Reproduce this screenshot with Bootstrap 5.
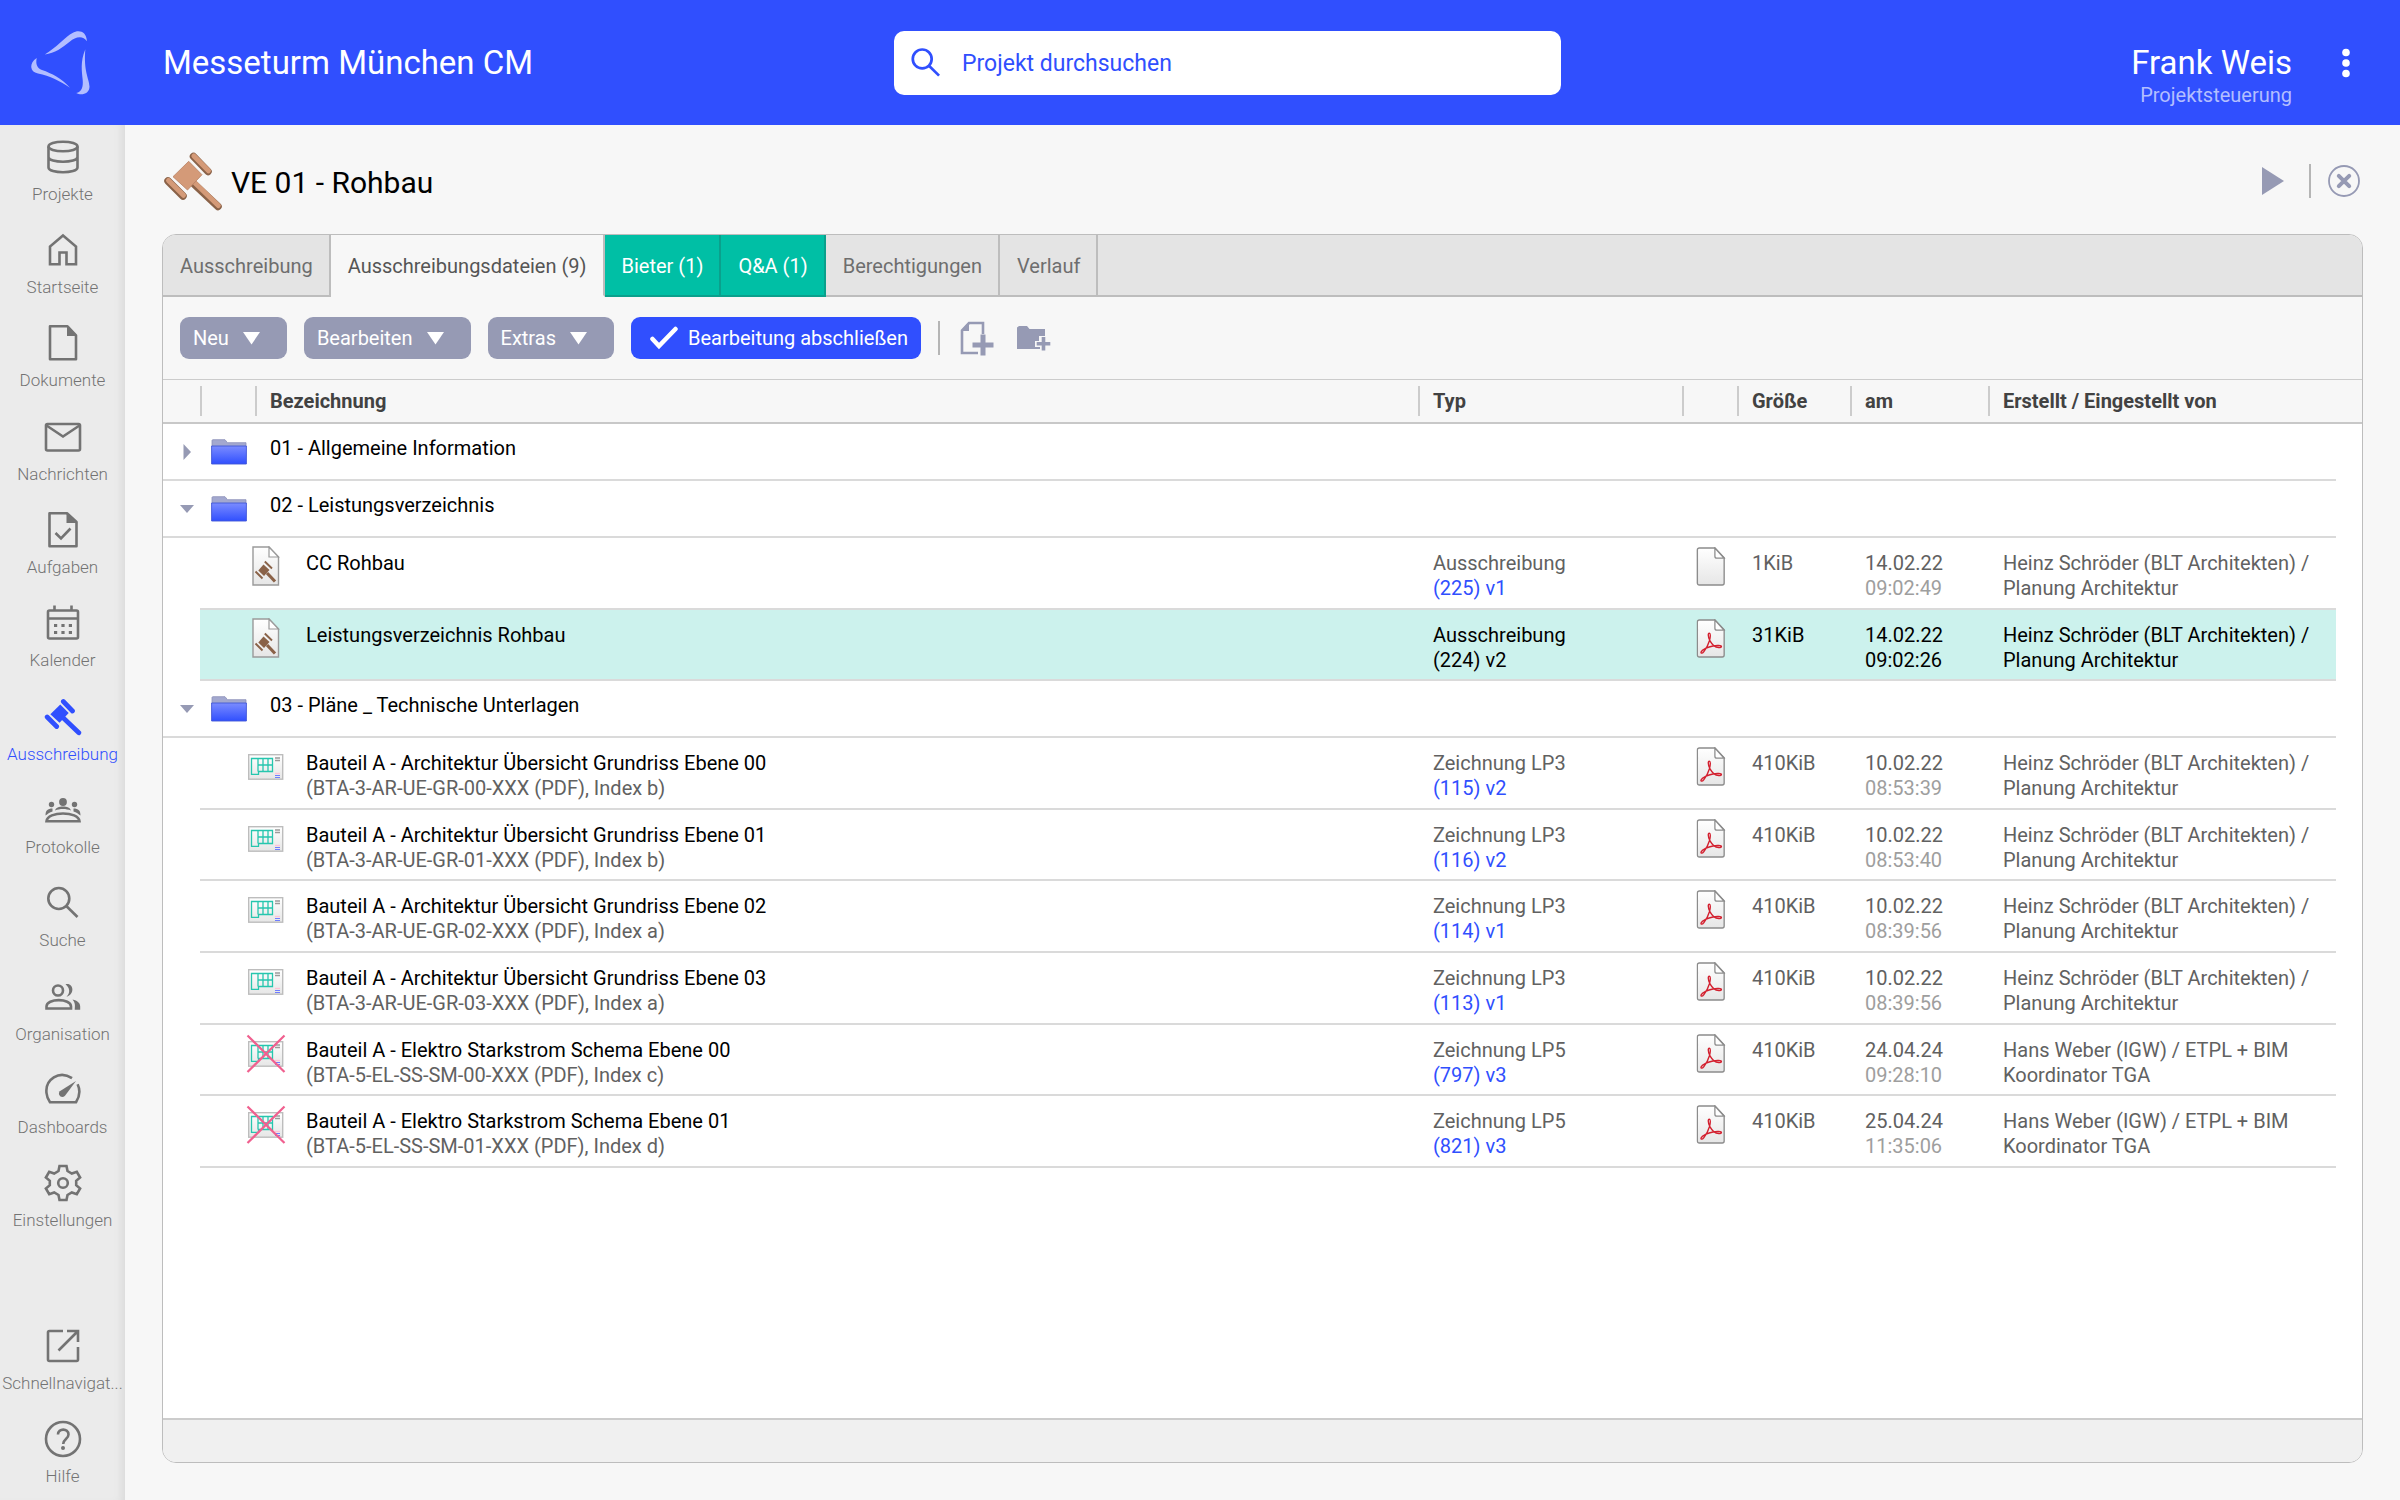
<!DOCTYPE html>
<html lang="de">
<head>
<meta charset="utf-8">
<meta name="viewport" content="width=device-width, initial-scale=1">
<title>VE 01 - Rohbau</title>
<link href="https://cdn.jsdelivr.net/npm/bootstrap@5.3.0/dist/css/bootstrap.min.css" rel="stylesheet">
<style>
:root { --brand:#304ffe; --slate:#969ab4; --line:#dadada; --edge:#bdbdbd; --teal:#00bfa5; }
body { font-family: Roboto, "Liberation Sans", sans-serif; font-size:20px; line-height:25px; color:#000; background:#f7f7f7; }
a { text-decoration:none; }
svg { display:block; flex:none; }
.topbar { background:var(--brand); height:125px; display:grid; grid-template-columns:37.25% 27.8% 1fr; align-items:center; color:#fff; }
.logo-slot { width:125px; padding-left:28px; }
.project-name { font-size:33px; line-height:40px; padding-left:38px; font-weight:400; }
.search-box { background:#fff; border-radius:10px; height:64px; padding:0 14px; gap:18px; color:var(--brand); }
.search-box input { border:0; outline:0; background:transparent; font-size:23px; color:var(--brand); padding:2px 0 0; }
.search-box input::placeholder { color:var(--brand); opacity:1; }
.user-box { padding-right:37px; gap:37px; }
.user-name { font-size:33px; line-height:40px; padding-top:25px; }
.user-role { color:#b3beff; }
.side { width:125px; background:#ebebeb; box-shadow:inset -9px 0 8px -6px #d9d9d9; }
.side-link { display:flex; flex-direction:column; align-items:center; height:93px; padding-top:12px; color:#737373; font-size:17px; line-height:22px; font-weight:300; white-space:nowrap; }
.side-link:nth-child(3n) { height:94px; }
.side-link svg { margin-bottom:6px; }
.side-link.current { color:var(--brand); }
.side .icn { width:40px; height:40px; fill:none; stroke:currentColor; stroke-width:2.6; }
.work { padding:0 37px 37px; }
.title-bar { height:109px; padding:2px 2px 0 1px; }
.title-bar h1 { font-size:30px; line-height:36px; font-weight:400; margin:0; padding:4px 0 0 8px; }
.bare { border:0; background:none; padding:0; color:var(--slate); }
.rule-v { width:2px; height:34px; background:#b5b5b5; }
.panel { border:1px solid var(--edge); border-radius:14px; overflow:hidden; background:#fff; }
.tab-strip { background:#e4e4e4; height:62px; }
.tab-strip .tab-btn { border:0; border-right:2px solid var(--edge); border-bottom:2px solid var(--edge); background:#e4e4e4; color:#6e6e6e; padding:2px 16px 0 17px; height:62px; }
.tab-strip .tab-btn.active { background:#f7f7f7; color:#555; border-bottom-color:#f7f7f7; }
.tab-strip .tab-btn.hot { background:var(--teal); color:#fff; border-color:#0aa08c; }
.tab-rest { border-bottom:2px solid var(--edge); }
.tools { background:#f7f7f7; padding:20px 17px; gap:17px; border-bottom:1px solid #ccc; }
.tool-btn { height:42px; border:0; border-radius:9px; background:var(--slate); color:#fff; padding:0 27px 0 13px; gap:14px; }
.tool-btn.go { background:var(--brand); padding:0 13px 0 19px; gap:10px; }
.files { table-layout:fixed; width:100%; border-collapse:separate; border-spacing:0; }
.files th { height:44px; background:#f7f7f7; border-bottom:2px solid #c8c8c8; padding:0; color:#424242; font-weight:700; }
.files th > div { height:30px; line-height:30px; border-left:2px solid #ccc; padding-left:13px; white-space:nowrap; }
.files th:first-child > div { border:0; }
.files td { height:72px; vertical-align:top; padding:13px 0 0 15px; border-bottom:2px solid var(--line); color:#616161; }
.files tr:nth-child(3n+1) td { height:71px; }
.files tr.dir td { height:57px; padding-top:12px; color:#000; }
.files td:last-child, .files tr.doc td:first-child { border:0; }
.files tr.dir td.arrow { padding:19px 0 0 15px; }
.files tr.dir td.dir-icon { padding:15px 0 0 11px; }
.files td.ext { padding:9px 0 0 14px; }
.files td.title { padding:0 0 0 46px; }
.kind { width:40px; padding-top:8px; }
.label-col { padding:13px 0 0 20px; color:#000; }
.label-col span { color:#616161; }
.files .clock { color:#9e9e9e; }
.files a { color:var(--brand); }
.files tr.chosen td:not(:first-child):not(:last-child) { background:#ccf2ed; color:#000; }
.files tr.chosen a, .files tr.chosen .clock { color:#000; }
.panel-foot { height:44px; background:#f0f0f0; border-top:2px solid #ccc; }
</style>
</head>
<body>
<svg width="0" height="0" class="position-absolute" aria-hidden="true">
  <defs>
    <linearGradient id="gFolder" x1="0" y1="0" x2="0" y2="1"><stop offset="0" stop-color="#7b8cff"/><stop offset="1" stop-color="#304ffe"/></linearGradient>
    <linearGradient id="gPage" x1="0" y1="0" x2="0" y2="1"><stop offset="0" stop-color="#fff"/><stop offset="1" stop-color="#e6e6e6"/></linearGradient>
    <symbol id="gavel" viewBox="0 0 60 60">
      <g stroke="currentColor" fill="currentColor" stroke-linecap="round">
        <path stroke="none" d="M25.7 10.3 39 23.7 24.5 39 10 25.7z"/>
        <path d="M30.500 5.500 45 20.500M5 30 20 45" stroke-width="7.500"/>
        <path d="M31 32 55 55" stroke-width="7.500"/>
      </g>
    </symbol>
    <symbol id="page" viewBox="0 0 30 40">
      <path d="M3 1h16l9.500 10v26a2 2 0 0 1-2 2H3a2 2 0 0 1-2-2V3a2 2 0 0 1 2-2z" fill="url(#gPage)" stroke="#8c8c8c" stroke-width="1.400"/>
      <path d="M19 1v8.500a2 2 0 0 0 2 2h7.500z" fill="#fff" stroke="#8c8c8c" stroke-width="1.300"/>
    </symbol>
    <symbol id="pdf" viewBox="0 0 30 40">
      <use href="#page"/>
      <path d="M13.300 14.500c1.600.3 1 4.500.2 7.500-1.200 4.300-4 9-6 11.700-1.300 1.800-3.200 1.600-2.700.2.900-2.600 7.300-5.300 12.200-6.200 4-.8 8.700-.7 8.700.7s-5 1.200-7.500-.8c-3.200-2.600-6-7.600-6-11.200 0-1.300.4-2 1.100-1.900z" fill="none" stroke="#d3202f" stroke-width="1.400"/>
    </symbol>
    <symbol id="tender" viewBox="0 0 40 40">
      <path d="M7 1h16l9.500 10v28H7z" fill="url(#gPage)" stroke="#9a9a9a" stroke-width="1.400"/>
      <path d="M23 1v10h9.500z" fill="#fff" stroke="#9a9a9a" stroke-width="1.200"/>
      <g stroke="#8a6248" fill="#8a6248"><path stroke="none" d="M17.500 18.500 23.500 24 18 30 12.300 24.500z"/><path d="M18.800 15.500 26 22.500M9.500 25.500 16.500 32.500" stroke-width="1.900"/><path d="M21 27 29 35.500" stroke-width="3.200"/></g>
    </symbol>
    <symbol id="plan" viewBox="0 0 40 40">
      <rect x="2.700" y="8.700" width="34" height="24.500" fill="url(#gPage)" stroke="#bdbdbd" stroke-width="1.400"/>
      <path d="M5.500 12.500h21v13h-14v2.800h-7zM12 12.500v13M12 19h14.500M17 12.500v13M22 12.500v13" fill="none" stroke="#26c6ae" stroke-width="1.300"/>
      <path d="M29 12h5M29 14.500h5" stroke="#9a9a9a" stroke-width="1.300"/><path d="M29 27.500h5" stroke="#ffc1d6" stroke-width="1.300"/><path d="M29 29.500h5M29 31.500h5" stroke="#6f7dff" stroke-width="1.200"/>
    </symbol>
    <symbol id="planvoid" viewBox="0 0 40 40"><use href="#plan"/><path d="M1.500 2.500 38.500 39M38.500 2.500 1.500 39" stroke="#f0608f" stroke-width="2.200"/></symbol>
    <symbol id="folder" viewBox="0 0 36 26">
      <path d="M1 8V1.500A1 1 0 0 1 2 .7h12l2.500 3H35V8z" fill="#a3a8cf" stroke="#8a8fb8" stroke-width=".8"/>
      <path d="M.6 7h34.800v18H.6z" fill="url(#gFolder)" stroke="#4257d6" stroke-width=".9"/>
    </symbol>
    <symbol id="down" viewBox="0 0 18 18"><path d="M2 5h14l-7 8z" fill="#969ab4"/></symbol>
    <symbol id="right" viewBox="0 0 18 18"><path d="M5.500 1v16l7.500-8z" fill="#969ab4"/></symbol>
    <symbol id="tri" viewBox="0 0 17 14"><path d="M0 1h17L8.500 13.500z" fill="#fff"/></symbol>
    <symbol id="lens" viewBox="0 0 40 40"><circle cx="15.800" cy="15.500" r="10.500"/><path d="M23.300 23 34.500 34"/></symbol>
  </defs>
</svg>

<div class="d-flex flex-column min-vh-100">
  <header class="topbar">
    <div class="d-flex align-items-center">
      <div class="logo-slot"><a href="#" aria-label="Startseite"><svg width="64" height="70" viewBox="28 28 64 70" fill="#b3beff"><path d="M44.800 54.500C56 48 66 36 72.500 33c6-3.500 14-2 14.400 8.300C83 35 75 37 70 41.500 62 48 55 53 44.800 54.500z"/><path d="M36.700 58C29 63 29.500 72 38 73.500c12 2.500 22 7.500 32 14.200C61 78 52 73.500 42 70c-5-2-6.500-6-5.300-12z"/><path d="M85.300 49.300C80 62 82 72 82.700 80c.6 7-1 12-6.500 13 5 3 13.300 1 13.300-6.500C89 78 83.500 72 85.300 49.300z"/></svg></a></div>
      <div class="project-name">Messeturm München CM</div>
    </div>
    <form class="search-box d-flex align-items-center" role="search">
      <svg width="36" height="36" viewBox="0 0 40 40" fill="none" stroke="currentColor" stroke-width="3"><use href="#lens"/></svg>
      <input class="flex-fill" type="search" placeholder="Projekt durchsuchen" aria-label="Projekt durchsuchen">
    </form>
    <div class="user-box d-flex justify-content-end align-items-center">
      <div class="text-end"><div class="user-name">Frank Weis</div><div class="user-role">Projektsteuerung</div></div>
      <button class="bare" type="button" aria-label="Menü"><svg width="34" height="34" viewBox="0 0 34 34" fill="#fff"><circle cx="17" cy="6.500" r="3.800"/><circle cx="17" cy="17" r="3.800"/><circle cx="17" cy="27.500" r="3.800"/></svg></button>
    </div>
  </header>

  <div class="d-flex flex-fill">
    <nav class="side d-flex flex-column flex-shrink-0" aria-label="Module">
      <a class="side-link" href="#"><svg class="icn" viewBox="0 0 40 40"><ellipse cx="20" cy="9.500" rx="14.500" ry="4.800"/><path d="M5.500 9.500v21c0 6.400 29 6.400 29 0v-21M5.500 20c0 6.400 29 6.400 29 0"/></svg>Projekte</a>
      <a class="side-link" href="#"><svg class="icn" viewBox="0 0 40 40"><path d="M20 5.500 33 16.500v17.800h-9.500V22.500h-7v11.800H7V16.500z"/></svg>Startseite</a>
      <a class="side-link" href="#"><svg class="icn" viewBox="0 0 40 40"><path d="M7 3.300h17.500L33 12.500v23.700H7z" stroke-linejoin="round"/><path d="M24 3.300v9.700h9z" fill="currentColor" stroke="none"/></svg>Dokumente</a>
      <a class="side-link" href="#"><svg class="icn" viewBox="0 0 40 40"><rect x="3" y="7" width="34" height="26.500" rx="1.500"/><path d="M3.500 8.500 20 19.500 36.500 8.500"/></svg>Nachrichten</a>
      <a class="side-link" href="#"><svg class="icn" viewBox="0 0 40 40"><path d="M6.500 3.300h17.500L33.500 12v24.200h-27z" stroke-linejoin="round"/><path d="M23.500 3.300v9.700h10z" fill="currentColor" stroke="none"/><path d="M12.500 23 18 28.500 27.500 18.500"/></svg>Aufgaben</a>
      <a class="side-link" href="#"><svg class="icn" viewBox="0 0 40 40"><rect x="5" y="7.500" width="30" height="28" rx="1.500"/><path d="M5 15.500h30M11.500 2.500v5M28.500 2.500v5"/><path d="M11 22.500h3.200M18.400 22.500h3.200M25.800 22.500h3.200M11 29.500h3.200M18.400 29.500h3.200M25.800 29.500h3.200" stroke-width="3.200"/></svg>Kalender</a>
      <a class="side-link current" href="#" aria-current="page"><svg width="40" height="40"><use href="#gavel" x="1" y="1" width="38" height="38"/></svg>Ausschreibung</a>
      <a class="side-link" href="#"><svg class="icn" viewBox="0 0 40 40"><g fill="currentColor" stroke="none"><circle cx="20" cy="12" r="3.900"/><circle cx="8.500" cy="14.500" r="2.700"/><circle cx="31.500" cy="14.500" r="2.700"/><path d="M12 20.500c1-5.500 15-5.500 16 0-5-2-11-2-16 0zM2.500 25.500c0-5 2-7 7-7v3c-3 1-5 2.500-7 4zM37.500 25.500c0-5-2-7-7-7v3c3 1 5 2.500 7 4z"/></g><path d="M3.500 31.300c1-10.500 32-10.500 33 0z"/></svg>Protokolle</a>
      <a class="side-link" href="#"><svg class="icn" viewBox="0 0 40 40"><use href="#lens"/></svg>Suche</a>
      <a class="side-link" href="#"><svg class="icn" viewBox="0 0 40 40"><circle cx="15" cy="13.500" r="5"/><path d="M3.500 31.500v-2c0-8.500 24.500-8.500 24.500 0v2z"/><path d="M22.500 7.200c8-2 10 10 1 12.600 4-4 3.500-9-1-12.600zM29.500 22.500c5 1.200 7.700 3.500 7.700 7v3.300h-5.500c.5-5 .5-7-2.200-10.300z" fill="currentColor" stroke="none"/></svg>Organisation</a>
      <a class="side-link" href="#"><svg class="icn" viewBox="0 0 40 40" stroke-width="3"><path d="M29 8.200C16-.5 2 10 3.500 23c.3 3.500 1.500 6.500 3.500 9.300h26c4-6.300 4.500-12 1.600-18"/><path d="M33 11 22 25.700c-3.500 3.300-8-1-5.200-4.500z" fill="currentColor" stroke="none"/></svg>Dashboards</a>
      <a class="side-link" href="#"><svg class="icn" viewBox="0 0 40 40"><path d="M16.500 3h7l1 5 4.300 2.500 5-1.700 3.300 5.700-3.900 3.300v4.400l3.900 3.300-3.300 5.700-5-1.700-4.300 2.500-1 5h-7l-1-5-4.300-2.500-5 1.700-3.300-5.700 3.900-3.300v-4.400l-3.900-3.300 3.300-5.700 5 1.700 4.300-2.500z"/><circle cx="20" cy="20" r="4.800"/></svg>Einstellungen</a>
      <div class="mt-auto">
        <a class="side-link" href="#"><svg class="icn" viewBox="0 0 40 40" stroke-width="3"><path d="M20 5H6.500q-1.500 0-1.500 1.500v27q0 1.500 1.500 1.500h27q1.500 0 1.500-1.500V21M24 5h11v11M34.500 5.500 15.500 24.500"/></svg>Schnellnavigat...</a>
        <a class="side-link" href="#"><svg class="icn" viewBox="0 0 40 40"><circle cx="20" cy="20" r="17"/><path d="M15 15.500c0-6.500 10.500-6.500 10.500 0 0 4.500-5.300 4.500-5.300 9.500"/><circle cx="20" cy="29" r="2" fill="currentColor" stroke="none"/></svg>Hilfe</a>
      </div>
    </nav>

    <main class="work d-flex flex-column flex-fill">
      <div class="title-bar d-flex align-items-center">
        <svg width="60" height="60" viewBox="0 0 60 60"><g fill="none" stroke="#8a6248" stroke-linecap="round"><path d="M30.500 5.500 45 20.500M5 30 20 45M31 33 55 55.500" stroke-width="7.500"/><path d="M30.900 5 45.500 19.800M5.500 29.400 20.500 44.300M32 32 55.300 54.500" stroke="#d49a78" stroke-width="5"/></g><path d="M25.700 10.300 39 23.700 24.500 39 10 25.700z" fill="#d49a78" stroke="#b98263" stroke-width=".8"/></svg>
        <h1>VE 01 - Rohbau</h1>
        <div class="d-flex align-items-center ms-auto">
          <button class="bare me-4" type="button" aria-label="Abspielen"><svg width="24" height="28" viewBox="0 0 24 28"><path d="M1 0v28l22-14z" fill="#969ab4"/></svg></button>
          <div class="rule-v me-3"></div>
          <button class="bare" type="button" aria-label="Schließen"><svg width="34" height="34" viewBox="0 0 34 34" fill="none" stroke="#969ab4"><circle cx="17" cy="17" r="15" stroke-width="1.800"/><path d="M11.800 11.800 22.200 22.200M22.200 11.800 11.800 22.200" stroke-width="4" stroke-linecap="round"/></svg></button>
        </div>
      </div>

      <section class="panel d-flex flex-column flex-fill">
        <div class="tab-strip d-flex" role="tablist">
          <button class="tab-btn" role="tab" type="button">Ausschreibung</button>
          <button class="tab-btn active" role="tab" type="button" aria-selected="true">Ausschreibungsdateien (9)</button>
          <button class="tab-btn hot" role="tab" type="button">Bieter (1)</button>
          <button class="tab-btn hot" role="tab" type="button">Q&amp;A (1)</button>
          <button class="tab-btn" role="tab" type="button">Berechtigungen</button>
          <button class="tab-btn" role="tab" type="button">Verlauf</button>
          <div class="tab-rest flex-fill"></div>
        </div>
        <div class="tools d-flex align-items-center">
          <button class="tool-btn d-flex align-items-center" type="button">Neu <svg width="17" height="14"><use href="#tri"/></svg></button>
          <button class="tool-btn d-flex align-items-center" type="button">Bearbeiten <svg width="17" height="14"><use href="#tri"/></svg></button>
          <button class="tool-btn d-flex align-items-center" type="button">Extras <svg width="17" height="14"><use href="#tri"/></svg></button>
          <button class="tool-btn go d-flex align-items-center" type="button"><svg width="28" height="24" viewBox="0 0 28 24"><path d="M2.500 13 9 20 25.500 3" fill="none" stroke="#fff" stroke-width="4.500" stroke-linecap="round"/></svg> Bearbeitung abschließen</button>
          <div class="rule-v"></div>
          <button class="bare" type="button" aria-label="Neues Dokument"><svg width="38" height="36" viewBox="-2 0 38 36"><path d="M24 14V3H10L3 10.500V33h16" fill="none" stroke="#969ab4" stroke-width="2.600"/><path d="M2 11 10 2v9zM21.500 14.500h5v8h8v5h-8v8h-5v-8h-8v-5h8z" fill="#969ab4"/></svg></button>
          <button class="bare ms-1" type="button" aria-label="Neuer Ordner"><svg width="36" height="36" viewBox="0 0 36 36" fill="#969ab4"><path d="M1 7.500 3 6h8l2.500 3H29v7h-6v5h-4v6h5v2H1z"/><path d="M25.700 17h3.600v5h5v3.600h-5v5h-3.600v-5h-5V22h5z"/></svg></button>
        </div>
        <table class="files">
          <colgroup><col style="width:37px"><col style="width:55px"><col><col style="width:264px"><col style="width:55px"><col style="width:113px"><col style="width:138px"><col style="width:348px"><col style="width:26px"></colgroup>
          <thead><tr><th><div></div></th><th><div></div></th><th><div>Bezeichnung</div></th><th><div>Typ</div></th><th><div></div></th><th><div>Größe</div></th><th><div>am</div></th><th colspan="2"><div>Erstellt / Eingestellt von</div></th></tr></thead>
          <tbody>
            <tr class="dir"><td class="arrow"><svg width="18" height="18"><use href="#right"/></svg></td><td class="dir-icon"><svg width="36" height="26"><use href="#folder"/></svg></td><td colspan="6">01 - Allgemeine Information</td><td></td></tr>
            <tr class="dir"><td class="arrow"><svg width="18" height="18"><use href="#down"/></svg></td><td class="dir-icon"><svg width="36" height="26"><use href="#folder"/></svg></td><td colspan="6">02 - Leistungsverzeichnis</td><td></td></tr>
            <tr class="doc"><td></td><td class="title" colspan="2"><div class="d-flex"><div class="kind"><svg width="40" height="40"><use href="#tender"/></svg></div><div class="label-col">CC Rohbau</div></div></td><td>Ausschreibung<br><a href="#">(225) v1</a></td><td class="ext"><svg width="30" height="39"><use href="#page"/></svg></td><td>1KiB</td><td>14.02.22<br><span class="clock">09:02:49</span></td><td>Heinz Schröder (BLT Architekten) / Planung Architektur</td><td></td></tr>
            <tr class="doc chosen"><td></td><td class="title" colspan="2"><div class="d-flex"><div class="kind"><svg width="40" height="40"><use href="#tender"/></svg></div><div class="label-col">Leistungsverzeichnis Rohbau</div></div></td><td>Ausschreibung<br><a href="#">(224) v2</a></td><td class="ext"><svg width="30" height="39"><use href="#pdf"/></svg></td><td>31KiB</td><td>14.02.22<br><span class="clock">09:02:26</span></td><td>Heinz Schröder (BLT Architekten) / Planung Architektur</td><td></td></tr>
            <tr class="dir"><td class="arrow"><svg width="18" height="18"><use href="#down"/></svg></td><td class="dir-icon"><svg width="36" height="26"><use href="#folder"/></svg></td><td colspan="6">03 - Pläne _ Technische Unterlagen</td><td></td></tr>
            <tr class="doc"><td></td><td class="title" colspan="2"><div class="d-flex"><div class="kind"><svg width="40" height="40"><use href="#plan"/></svg></div><div class="label-col">Bauteil A - Architektur Übersicht Grundriss Ebene 00<br><span>(BTA-3-AR-UE-GR-00-XXX (PDF), Index b)</span></div></div></td><td>Zeichnung LP3<br><a href="#">(115) v2</a></td><td class="ext"><svg width="30" height="39"><use href="#pdf"/></svg></td><td>410KiB</td><td>10.02.22<br><span class="clock">08:53:39</span></td><td>Heinz Schröder (BLT Architekten) / Planung Architektur</td><td></td></tr>
            <tr class="doc"><td></td><td class="title" colspan="2"><div class="d-flex"><div class="kind"><svg width="40" height="40"><use href="#plan"/></svg></div><div class="label-col">Bauteil A - Architektur Übersicht Grundriss Ebene 01<br><span>(BTA-3-AR-UE-GR-01-XXX (PDF), Index b)</span></div></div></td><td>Zeichnung LP3<br><a href="#">(116) v2</a></td><td class="ext"><svg width="30" height="39"><use href="#pdf"/></svg></td><td>410KiB</td><td>10.02.22<br><span class="clock">08:53:40</span></td><td>Heinz Schröder (BLT Architekten) / Planung Architektur</td><td></td></tr>
            <tr class="doc"><td></td><td class="title" colspan="2"><div class="d-flex"><div class="kind"><svg width="40" height="40"><use href="#plan"/></svg></div><div class="label-col">Bauteil A - Architektur Übersicht Grundriss Ebene 02<br><span>(BTA-3-AR-UE-GR-02-XXX (PDF), Index a)</span></div></div></td><td>Zeichnung LP3<br><a href="#">(114) v1</a></td><td class="ext"><svg width="30" height="39"><use href="#pdf"/></svg></td><td>410KiB</td><td>10.02.22<br><span class="clock">08:39:56</span></td><td>Heinz Schröder (BLT Architekten) / Planung Architektur</td><td></td></tr>
            <tr class="doc"><td></td><td class="title" colspan="2"><div class="d-flex"><div class="kind"><svg width="40" height="40"><use href="#plan"/></svg></div><div class="label-col">Bauteil A - Architektur Übersicht Grundriss Ebene 03<br><span>(BTA-3-AR-UE-GR-03-XXX (PDF), Index a)</span></div></div></td><td>Zeichnung LP3<br><a href="#">(113) v1</a></td><td class="ext"><svg width="30" height="39"><use href="#pdf"/></svg></td><td>410KiB</td><td>10.02.22<br><span class="clock">08:39:56</span></td><td>Heinz Schröder (BLT Architekten) / Planung Architektur</td><td></td></tr>
            <tr class="doc"><td></td><td class="title" colspan="2"><div class="d-flex"><div class="kind"><svg width="40" height="40"><use href="#planvoid"/></svg></div><div class="label-col">Bauteil A - Elektro Starkstrom Schema Ebene 00<br><span>(BTA-5-EL-SS-SM-00-XXX (PDF), Index c)</span></div></div></td><td>Zeichnung LP5<br><a href="#">(797) v3</a></td><td class="ext"><svg width="30" height="39"><use href="#pdf"/></svg></td><td>410KiB</td><td>24.04.24<br><span class="clock">09:28:10</span></td><td>Hans Weber (IGW) / ETPL + BIM Koordinator TGA</td><td></td></tr>
            <tr class="doc"><td></td><td class="title" colspan="2"><div class="d-flex"><div class="kind"><svg width="40" height="40"><use href="#planvoid"/></svg></div><div class="label-col">Bauteil A - Elektro Starkstrom Schema Ebene 01<br><span>(BTA-5-EL-SS-SM-01-XXX (PDF), Index d)</span></div></div></td><td>Zeichnung LP5<br><a href="#">(821) v3</a></td><td class="ext"><svg width="30" height="39"><use href="#pdf"/></svg></td><td>410KiB</td><td>25.04.24<br><span class="clock">11:35:06</span></td><td>Hans Weber (IGW) / ETPL + BIM Koordinator TGA</td><td></td></tr>
          </tbody>
        </table>
        <div class="panel-foot mt-auto"></div>
      </section>
    </main>
  </div>
</div>
<script src="https://cdn.jsdelivr.net/npm/bootstrap@5.3.0/dist/js/bootstrap.bundle.min.js"></script>
</body>
</html>
